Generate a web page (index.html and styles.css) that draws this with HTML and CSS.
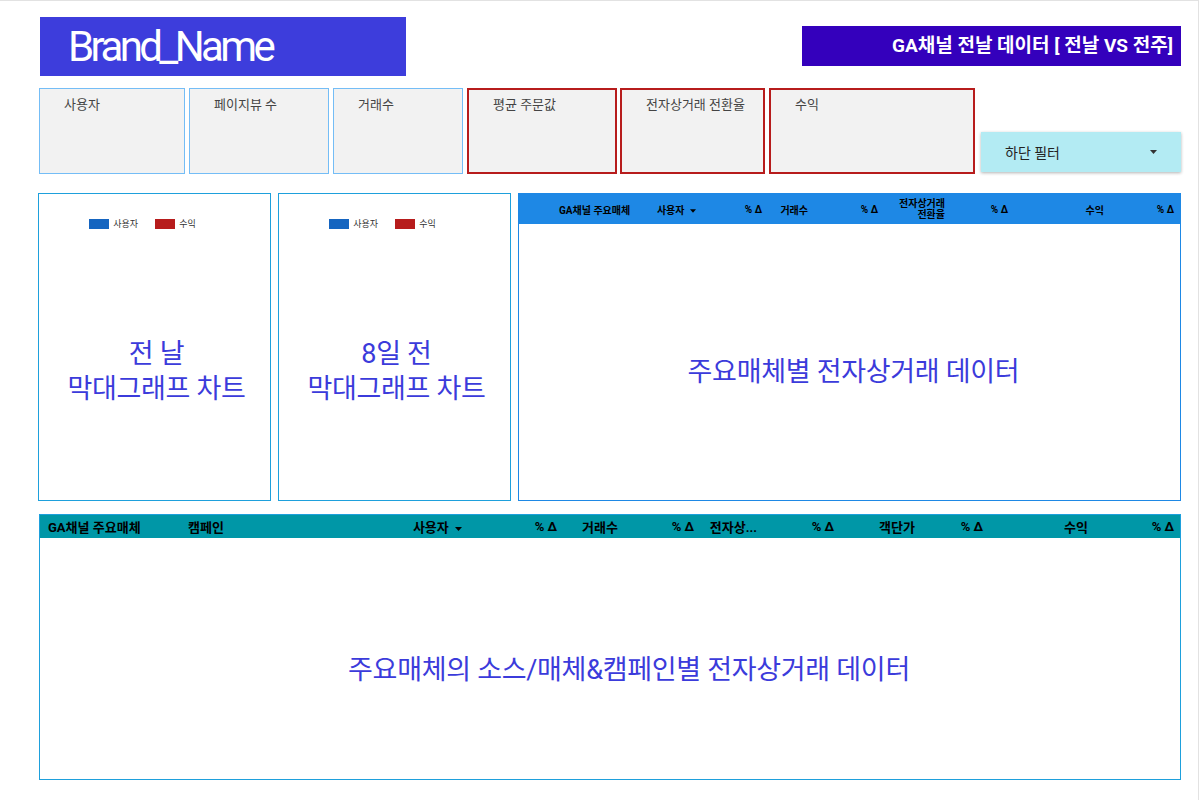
FILE: index.html
```html
<!DOCTYPE html>
<html lang="ko">
<head>
  <meta charset="UTF-8">
  <title>GA채널 전날 데이터</title>
  <link rel="stylesheet" href="styles.css">
</head>
<body>
  <div class="page">

    <header class="top">
      <div class="brand">Brand_Name</div>
      <div class="report-title">GA채널 전날 데이터 [ 전날 VS 전주]</div>
    </header>

    <section class="kpis">
      <div class="kpi kpi-w1">사용자</div>
      <div class="kpi kpi-w2">페이지뷰 수</div>
      <div class="kpi kpi-w3">거래수</div>
      <div class="kpi kpi-red kpi-w4">평균 주문값</div>
      <div class="kpi kpi-red kpi-w5">전자상거래 전환율</div>
      <div class="kpi kpi-red kpi-w6">수익</div>
      <div class="filter">
        <span>하단 필터</span>
        <svg class="caret" width="7" height="4" viewBox="0 0 7 4"><path d="M0 0h7L3.5 4z" fill="#333"/></svg>
      </div>
    </section>

    <section class="middle">
      <div class="chart">
        <div class="legend">
          <span class="swatch blue"></span><span>사용자</span>
          <span class="swatch red"></span><span>수익</span>
        </div>
        <div class="placeholder">전 날<br>막대그래프 차트</div>
      </div>
      <div class="chart">
        <div class="legend">
          <span class="swatch blue"></span><span>사용자</span>
          <span class="swatch red"></span><span>수익</span>
        </div>
        <div class="placeholder">8일 전<br>막대그래프 차트</div>
      </div>
      <div class="table table-top">
        <div class="thead">
          <div class="th dim">GA채널 주요매체</div>
          <div class="th">사용자 <svg class="caret" width="6" height="4" viewBox="0 0 7 4"><path d="M0 0h7L3.5 4z" fill="#000"/></svg></div>
          <div class="th">% Δ</div>
          <div class="th">거래수</div>
          <div class="th">% Δ</div>
          <div class="th two-line">전자상거래<br>전환율</div>
          <div class="th">% Δ</div>
          <div class="th">수익</div>
          <div class="th">% Δ</div>
        </div>
        <div class="placeholder">주요매체별 전자상거래 데이터</div>
      </div>
    </section>

    <section class="table table-bottom">
      <div class="thead">
        <div class="th dim">GA채널 주요매체</div>
        <div class="th dim">캠페인</div>
        <div class="th">사용자 <svg class="caret" width="7" height="4" viewBox="0 0 7 4"><path d="M0 0h7L3.5 4z" fill="#000"/></svg></div>
        <div class="th">% Δ</div>
        <div class="th">거래수</div>
        <div class="th">% Δ</div>
        <div class="th">전자상...</div>
        <div class="th">% Δ</div>
        <div class="th">객단가</div>
        <div class="th">% Δ</div>
        <div class="th">수익</div>
        <div class="th">% Δ</div>
      </div>
      <div class="placeholder">주요매체의 소스/매체&amp;캠페인별 전자상거래 데이터</div>
    </section>

  </div>
</body>
</html>
```

FILE: styles.css
```css
body {
  margin: 0;
  font-family: Roboto, "Noto Sans CJK KR", sans-serif;
  background: #fff;
}

.page {
  width: 1198px;
  height: 799px;
  border-top: 1px solid #e2e2e2;
  border-right: 1px solid #e2e2e2;
}

/* header */
.top {
  display: flex;
  justify-content: space-between;
  align-items: flex-start;
  padding: 16px 17px 0 40px;
}

.brand {
  width: 338px;
  height: 59px;
  padding-left: 28px;
  background: #3d3ddc;
  color: #fff;
  font-size: 42px;
  line-height: 59px;
  letter-spacing: -3.6px;
}

.report-title {
  width: 371px;
  height: 40px;
  margin-top: 9px;
  padding-right: 8px;
  background: #3400bc;
  color: #fff;
  font-size: 19px;
  font-weight: bold;
  line-height: 40px;
  text-align: right;
  white-space: nowrap;
}

/* score cards */
.kpis {
  display: flex;
  align-items: flex-start;
  gap: 4px;
  padding: 12px 0 0 39px;
  height: 86px;
}

.kpi {
  box-sizing: border-box;
  height: 86px;
  padding: 5px 0 0 24px;
  background: #f2f2f2;
  border: 1px solid #74bdf6;
  color: #444;
  font-size: 13px;
}

.kpi-red {
  border: 2px solid #b71c1c;
  padding: 4px 0 0 24px;
}

.kpi-w1 { width: 146px; }
.kpi-w2 { width: 140px; }
.kpi-w3 { width: 130px; }
.kpi-w4 { width: 150px; }
.kpi-w5 { width: 145px; margin-left: -1px; }
.kpi-w6 { width: 206px; }

.filter {
  display: flex;
  align-items: center;
  justify-content: space-between;
  box-sizing: border-box;
  width: 200px;
  height: 40px;
  margin: 44px 0 0 2px;
  padding: 0 24px;
  background: #b3ebf3;
  box-shadow: 0 1px 3px rgba(0, 0, 0, 0.3);
  color: #222;
  font-size: 14px;
}

.caret {
  display: inline-block;
}

/* charts + top table */
.middle {
  display: flex;
  gap: 7px;
  padding: 19px 0 0 38px;
  height: 308px;
}

.chart {
  box-sizing: border-box;
  width: 233px;
  height: 308px;
  border: 1px solid #1ea0dc;
  display: flex;
  flex-direction: column;
}

.legend {
  display: flex;
  align-items: center;
  justify-content: center;
  padding: 23px 24px 0 0;
  font-size: 9px;
  color: #333;
}

.swatch {
  width: 20px;
  height: 10px;
  margin-right: 4px;
}

.swatch.blue { background: #1565c0; }
.swatch.red { background: #b71c1c; margin-left: 17px; }

.placeholder {
  flex: 1;
  display: flex;
  align-items: center;
  justify-content: center;
  text-align: center;
  color: #3b3bdb;
  font-size: 27px;
  line-height: 35px;
  letter-spacing: -0.3px;
}

.chart .placeholder {
  padding: 14px 0 0 4px;
}

.table {
  box-sizing: border-box;
  display: flex;
  flex-direction: column;
}

.table-top {
  width: 663px;
  height: 308px;
  border: 1px solid #1e88e5;
}

.table-top .placeholder {
  padding: 20px 0 0 8px;
}

.table-bottom {
  width: 1142px;
  height: 266px;
  margin: 13px 0 0 39px;
  border: 1px solid #1ea0dc;
}

.table-bottom .placeholder {
  padding: 24px 0 0 38px;
}

.thead {
  display: grid;
  align-items: center;
  color: #000;
  font-weight: bold;
}

.table-top .thead {
  height: 30px;
  background: #1e88e5;
  font-size: 10px;
  grid-template-columns: 131px 52px 66px 46px 70px 67px 63px 96px 70px;
}

.table-top .th.dim {
  padding-left: 40px;
}

.table-bottom .thead {
  height: 23px;
  background: #0097a7;
  font-size: 13px;
  grid-template-columns: 140px 220px 68px 95px 61px 76px 63px 77px 81px 68px 105px 86px;
}

.th {
  text-align: right;
  padding-right: 6px;
  white-space: nowrap;
}

.th.dim {
  text-align: left;
  padding-left: 8px;
}

.th.two-line {
  line-height: 11px;
}

.th .caret {
  margin-left: 3px;
  vertical-align: middle;
}
```
